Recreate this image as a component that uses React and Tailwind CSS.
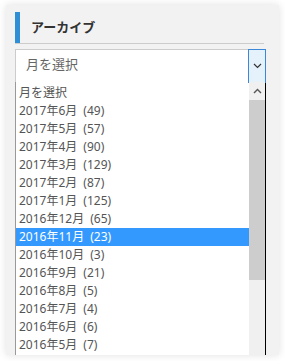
import React from "react";

const items = [
  "月を選択",
  "2017年6月\u2002(49)",
  "2017年5月\u2002(57)",
  "2017年4月\u2002(90)",
  "2017年3月\u2002(129)",
  "2017年2月\u2002(87)",
  "2017年1月\u2002(125)",
  "2016年12月\u2002(65)",
  "2016年11月\u2002(23)",
  "2016年10月\u2002(3)",
  "2016年9月\u2002(21)",
  "2016年8月\u2002(5)",
  "2016年7月\u2002(4)",
  "2016年6月\u2002(6)",
  "2016年5月\u2002(7)",
];

export default function App() {
  return (
    <div
      className="w-[285px] h-[361px] bg-white overflow-hidden pt-[5px] px-[6px]"
      style={{ fontFamily: '"Noto Sans", "Noto Sans CJK JP", sans-serif' }}
    >
      <div className="h-[350px] bg-[#f2f2f2] shadow-[0_0_8px_rgba(0,0,0,0.12)] pl-[9px] pr-[13px] pt-[7px] overflow-hidden">
        <div className="flex h-[32px] items-center border-b border-[#cccccc] mr-[2px]">
          <div className="w-[5px] h-full bg-[#2e8fd6]" />
          <div className="pl-[11px] text-[13px] font-bold text-[#333] leading-none">アーカイブ</div>
        </div>
        <div className="mt-[5px] flex h-[34px] bg-white border border-[#cccccc]">
          <div className="flex-1 flex items-center pl-[10px] pb-[2px] text-[13px] text-[#666]">月を選択</div>
          <div className="w-[18px] -my-px -mr-px border border-[#3c88d8] bg-[#e5f1fb] flex items-center justify-center">
            <svg width="9" height="6" viewBox="0 0 9 6">
              <path d="M1 1 L4.5 4.5 L8 1" fill="none" stroke="#333" strokeWidth="1.2" />
            </svg>
          </div>
        </div>
        <div className="flex -mt-px h-[300px] bg-white border-l border-[#999] border-r border-r-black">
          <div className="flex-1 pt-[2px] text-[12px] text-[#555]">
            {items.map((t, i) => (
              <div
                key={i}
                className={
                  "h-[18px] leading-[18px] pl-[3px] whitespace-nowrap " +
                  (i === 8 ? "bg-[#3399ff] text-white" : "")
                }
              >
                {t}
              </div>
            ))}
          </div>
          <div className="w-[16px] bg-[#f0f0f0] flex flex-col">
            <div className="h-[18px] flex items-center justify-center">
              <svg width="9" height="6" viewBox="0 0 9 6">
                <path d="M1 5 L4.5 1.5 L8 5" fill="none" stroke="#555" strokeWidth="1.4" />
              </svg>
            </div>
            <div className="h-[180px] bg-[#cdcdcd]" />
          </div>
        </div>
      </div>
    </div>
  );
}
